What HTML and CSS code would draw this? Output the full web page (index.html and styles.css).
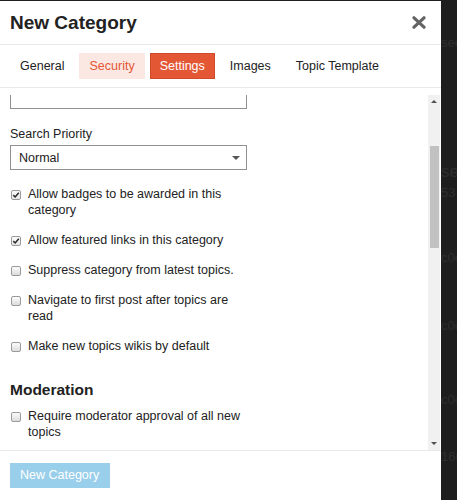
FILE: index.html
```html
<!DOCTYPE html>
<html lang="en">
<head>
<meta charset="utf-8">
<title>New Category</title>
<link rel="stylesheet" href="styles.css">
</head>
<body>
<div class="page">
  <div class="modal">
    <div class="modal-header">
      <h3 class="modal-title">New Category</h3>
      <button class="close" aria-label="close">
        <svg width="14" height="13" viewBox="0 0 14 13"><path d="M2 1.8 L12 11.2 M12 1.8 L2 11.2" stroke="#646464" stroke-width="3.2" stroke-linecap="round" fill="none"/></svg>
      </button>
    </div>
    <div class="tabs">
      <span class="tab">General</span>
      <span class="tab tab-soft">Security</span>
      <span class="tab tab-active">Settings</span>
      <span class="tab">Images</span>
      <span class="tab">Topic Template</span>
    </div>
    <div class="modal-body">
      <div class="content">
        <div class="clipped-input"></div>
        <label class="field-label">Search Priority</label>
        <div class="select"><span>Normal</span><span class="caret"></span></div>
        <div class="checks">
          <div class="check-row"><span class="cb checked"><svg width="8" height="8" viewBox="0 0 8 8"><path d="M1.3 4.1 L3.2 6 L6.8 1.7" stroke="#2a2a2a" stroke-width="1.5" fill="none"/></svg></span><span class="check-label">Allow badges to be awarded in this category</span></div>
          <div class="check-row"><span class="cb checked"><svg width="8" height="8" viewBox="0 0 8 8"><path d="M1.3 4.1 L3.2 6 L6.8 1.7" stroke="#2a2a2a" stroke-width="1.5" fill="none"/></svg></span><span class="check-label">Allow featured links in this category</span></div>
          <div class="check-row"><span class="cb"></span><span class="check-label">Suppress category from latest topics.</span></div>
          <div class="check-row"><span class="cb"></span><span class="check-label">Navigate to first post after topics are read</span></div>
          <div class="check-row"><span class="cb"></span><span class="check-label">Make new topics wikis by default</span></div>
        </div>
        <h4 class="section-title">Moderation</h4>
        <div class="checks">
          <div class="check-row"><span class="cb"></span><span class="check-label">Require moderator approval of all new topics</span></div>
        </div>
      </div>
      <div class="scrollbar">
        <div class="sb-btn"><span class="arrow-up"></span></div>
        <div class="sb-track"><div class="sb-thumb"></div></div>
        <div class="sb-btn"><span class="arrow-down"></span></div>
      </div>
    </div>
    <div class="modal-footer">
      <button class="btn-primary" disabled>New Category</button>
    </div>
  </div>
  <div class="backdrop">
    <div class="ghost g1">see</div>
    <div class="ghost g2">se</div>
    <div class="ghost g3">53</div>
    <div class="ghost g4">c0c</div>
    <div class="ghost g5">c0c</div>
    <div class="ghost g6">c0c</div>
    <div class="ghost g7">160</div>
  </div>
</div>
</body>
</html>
```

FILE: styles.css
```css
* { box-sizing: border-box; }
html, body { margin: 0; padding: 0; }
body {
  width: 457px;
  height: 500px;
  overflow: hidden;
  background: #1e1e1e;
  font-family: "Liberation Sans", Arial, sans-serif;
  color: #222;
}
.page {
  display: flex;
  height: 500px;
  padding-top: 1px;
}
.modal {
  width: 441px;
  flex: none;
  height: 499px;
  background: #fff;
  display: flex;
  flex-direction: column;
}
.modal-header {
  height: 44px;
  display: flex;
  align-items: center;
  justify-content: space-between;
  padding: 0 15px 0 10px;
  border-bottom: 1px solid #e9e9e9;
}
.modal-title {
  margin: 0;
  font-size: 19px;
  line-height: 23px;
  font-weight: bold;
  color: #222;
}
.close {
  border: 0;
  background: none;
  padding: 0;
  margin: 0 0 1px 0;
  width: 14px;
  height: 13px;
  display: flex;
}
.tabs {
  height: 43px;
  display: flex;
  gap: 5px;
  padding: 8px 10px;
  border-bottom: 1px solid #e9e9e9;
}
.tab {
  height: 26px;
  line-height: 26px;
  padding: 0 10px;
  font-size: 12.5px;
  color: #222;
}
.tab-soft {
  background: #fce8e2;
  color: #e45735;
}
.tab-active {
  background: #e45735;
  border: 1px solid #cf4a2b;
  line-height: 24px;
  padding: 0 9px;
  color: #fff;
}
.modal-body {
  margin-top: 7px;
  height: 355px;
  display: flex;
  flex: none;
}
.content {
  flex: 1;
  overflow: hidden;
  padding-left: 10px;
  font-size: 12.5px;
}
.clipped-input {
  width: 237px;
  height: 14px;
  border: 1px solid #919191;
  border-top: 0;
}
.field-label {
  display: block;
  margin-top: 17px;
  margin-bottom: 3px;
  line-height: 16px;
}
.select {
  width: 237px;
  height: 25px;
  border: 1px solid #919191;
  display: flex;
  align-items: center;
  justify-content: space-between;
  padding: 0 6px 0 8px;
}
.caret {
  width: 0;
  height: 0;
  border-left: 4px solid transparent;
  border-right: 4px solid transparent;
  border-top: 4px solid #555;
}
.checks {
  margin-top: 17px;
  width: 237px;
}
.check-row {
  display: flex;
  align-items: flex-start;
  gap: 7px;
  padding-left: 1px;
  margin-bottom: 14.4px;
  line-height: 15.8px;
}
.cb {
  flex: none;
  width: 10px;
  height: 10px;
  margin-top: 3px;
  border: 1px solid #9a9a9a;
  border-radius: 2px;
  background: linear-gradient(#fbfbfb, #dcdcdc);
  display: flex;
  align-items: center;
  justify-content: center;
}
.cb.checked {
  background: linear-gradient(#fdfdfd, #e6e6e6);
}
.section-title {
  margin: 26px 0 0 0;
  font-size: 15.5px;
  line-height: 18px;
  font-weight: bold;
}
.section-title + .checks {
  margin-top: 10px;
}
.scrollbar {
  width: 12px;
  margin-right: 1px;
  flex: none;
  background: #f1f1f1;
  display: flex;
  flex-direction: column;
}
.sb-btn {
  height: 13px;
  display: flex;
  align-items: center;
  justify-content: center;
}
.arrow-up {
  width: 0;
  height: 0;
  border-left: 3px solid transparent;
  border-right: 3px solid transparent;
  border-bottom: 3px solid #505050;
}
.arrow-down {
  width: 0;
  height: 0;
  border-left: 3px solid transparent;
  border-right: 3px solid transparent;
  border-top: 3px solid #505050;
}
.sb-track {
  flex: 1;
  padding: 38px 1px 0 2px;
}
.sb-thumb {
  height: 102px;
  background: #c1c1c1;
}
.modal-footer {
  flex: 1;
  border-top: 1px solid #e9e9e9;
  padding: 12px 10px;
}
.btn-primary {
  width: 100px;
  height: 25px;
  border: 0;
  padding: 0 10px;
  background: #99cfeb;
  color: #fff;
  font-family: "Liberation Sans", Arial, sans-serif;
  font-size: 12.5px;
  line-height: 25px;
  text-align: left;
}
.backdrop {
  flex: 1;
  overflow: hidden;
  color: #2e2e2e;
  font-size: 13px;
  line-height: 16px;
  white-space: nowrap;
}
.g1 { margin-top: 34px; }
.g2 { margin-top: 111px; font-size: 17px; line-height: 20px; }
.g3 { margin-top: 3px; }
.g4 { margin-top: 49px; }
.g5 { margin-top: 52px; }
.g6 { margin-top: 58px; }
.g7 { margin-top: 41px; }
```
